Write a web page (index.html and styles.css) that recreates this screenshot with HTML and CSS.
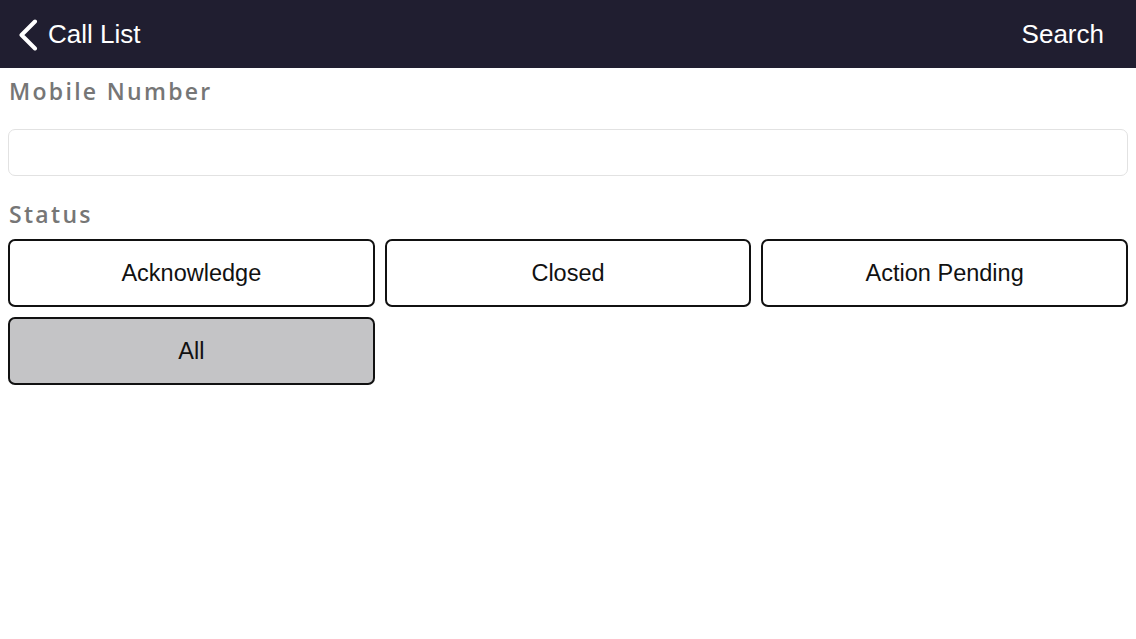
FILE: index.html
```html
<!DOCTYPE html>
<html>
<head>
<meta charset="utf-8">
<link rel="stylesheet" href="styles.css">
</head>
<body>
<header class="navbar">
  <a class="nav-back">
    <svg class="chevron" width="22" height="32" viewBox="0 0 22 32"><path d="M18 2.5 L4.5 16 L18 29.5" fill="none" stroke="#fff" stroke-width="4" stroke-linecap="round" stroke-linejoin="round"/></svg>
    <span>Call List</span>
  </a>
  <a class="nav-action">Search</a>
</header>
<main class="content">
  <label class="field-label">Mobile Number</label>
  <input class="text-input" type="text">
  <label class="field-label status-label">Status</label>
  <div class="status-grid">
    <button class="status-btn">Acknowledge</button>
    <button class="status-btn">Closed</button>
    <button class="status-btn">Action Pending</button>
    <button class="status-btn selected">All</button>
  </div>
</main>
</body>
</html>
```
FILE: styles.css
```css
* { box-sizing: border-box; }
html, body { margin: 0; padding: 0; background: #fff; }
body { font-family: "Liberation Sans", Arial, sans-serif; width: 1136px; height: 639px; overflow: hidden; }
.navbar {
  height: 68px;
  background: #201e30;
  display: flex;
  align-items: center;
  justify-content: space-between;
  padding: 0 32px 0 17px;
  color: #fff;
}
.nav-back { display: flex; align-items: center; gap: 9px; font-size: 26px; }
.chevron { display: block; margin-top: 1px; }
.nav-action { font-size: 26px; }
.content { padding: 10px 8px 0 8px; display: flex; flex-direction: column; }
.field-label {
  font-family: "Open Sans", sans-serif;
  font-weight: 600;
  font-size: 23px;
  color: #767676;
  letter-spacing: 2.3px;
  padding-left: 1px;
  line-height: 26px;
  height: 26px;
}
.text-input {
  margin-top: 25px;
  height: 47px;
  width: 100%;
  border: 1px solid #e2e2e2;
  border-radius: 7px;
  background: #fff;
  outline: none;
}
.status-label { margin-top: 25px; }
.status-grid {
  margin-top: 12px;
  display: grid;
  grid-template-columns: repeat(3, 1fr);
  column-gap: 10px;
  row-gap: 10px;
}
.status-btn {
  height: 68px;
  border: 2px solid #111;
  border-radius: 7px;
  background: #fff;
  font-family: "Liberation Sans", Arial, sans-serif;
  font-size: 23.5px;
  color: #111;
  padding: 0;
}
.status-btn.selected { background: #c4c4c6; }
```
